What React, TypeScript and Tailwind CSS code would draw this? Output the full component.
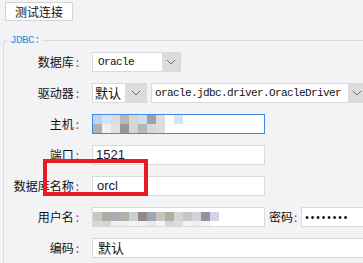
const cjk = { fontFamily: '"Noto Sans CJK SC", "Noto Sans", sans-serif' };
const mono = { fontFamily: '"Liberation Mono", "DejaVu Sans Mono", monospace' };
const sans = { fontFamily: '"Liberation Sans", "Noto Sans", sans-serif' };

const hostBlocks = [
  ["#bcd4f0", "#d4e4f8", "#dcdcdc", "#b8b8b4", "#d8d4d0", "#d0dcf0", "#a0a0a8", "#dcdcdc", "#ffffff", "#d8e4f8"],
  ["#b0b0b0", "#f0f0f0", "#e8e0dc", "#909898", "#d8d4d0", "#b0b8c0", "#d8d8d8", "#dcdcdc", "#ffffff", "#ffffff"],
];

const userBlocks = [
  ["#c8c8c8", "#b0aca8", "#a8acb4", "#b0b0ac", "#c8d0d0", "#908888", "#a0a4b4", "#c8c4b8", "#b0aca8", "#d8d4d4", "#c8c4cc", "#d0d4d8", "#9890a0", "#d0d4e4", "#ffffff"],
  ["#d8d8d8", "#d8d4d0", "#f0f0f0", "#f0f0f0", "#f4f4f4", "#f0f0f0", "#e8e8e8", "#f4f4f4", "#d0d8e0", "#d8e0dc", "#eef4f8", "#f0f0f0", "#f4f4f4", "#ffffff", "#ffffff"],
];

function Mosaic({ rows }: { rows: string[][] }) {
  return (
    <div className="flex flex-col">
      {rows.map((row, i) => (
        <div key={i} className="flex">
          {row.map((c, j) => (
            <div key={j} className="h-[9px] w-[9px]" style={{ backgroundColor: c }} />
          ))}
        </div>
      ))}
    </div>
  );
}

function Chevron() {
  return (
    <svg width="10" height="6" viewBox="0 0 10 6" fill="none">
      <path d="M1 1L5 5L9 1" stroke="#707070" strokeWidth="1" />
    </svg>
  );
}

function Label({ text }: { text: string }) {
  return (
    <div className="flex w-[78px] shrink-0 items-center justify-end pr-[3px] text-[12px] text-[#111]" style={cjk}>
      {text}
      <span className="ml-[2px] text-[#8a3a8c]">:</span>
    </div>
  );
}

function Row({ label, children }: { label: string; children: React.ReactNode }) {
  return (
    <div className="flex h-[20px] items-center">
      <Label text={label} />
      <div className="ml-[10px] flex h-full items-center">{children}</div>
    </div>
  );
}

export default function App() {
  return (
    <div className="relative h-[263px] w-[363px] overflow-hidden bg-[#f3f3f5]">
      <div className="pl-[5px] pt-[2px]">
        <button
          className="flex h-[19px] w-[68px] items-center justify-center border border-[#d4d4d4] bg-white text-[12px] text-[#111]"
          style={cjk}
        >
          测试连接
        </button>
      </div>

      <fieldset className="ml-[3px] mt-[12px] w-[420px] rounded-tl-[4px] border-l border-t border-[#dcdcdc] pb-[20px] pt-[5px]">
        <legend className="ml-[4px] px-[2px] text-[11px] leading-[14px] tracking-[-0.6px] text-[#2a90dc]" style={mono}>
          JDBC:
        </legend>

        <div className="flex flex-col gap-[11px]">
          <Row label="数据库">
            <div className="flex h-[20px] w-[89px] border border-[#dadada] bg-white">
              <div className="flex flex-1 items-center pl-[5px] text-[11px] tracking-[-0.6px] text-[#111]" style={mono}>
                Oracle
              </div>
              <div className="flex w-[18px] items-center justify-center bg-[#dcdcdc]">
                <Chevron />
              </div>
            </div>
          </Row>

          <Row label="驱动器">
            <div className="flex h-[20px] w-[55px] border border-[#dadada] bg-white">
              <div className="flex flex-1 items-center pl-[2px] text-[13px] text-[#111]" style={cjk}>
                默认
              </div>
              <div className="flex w-[21px] items-center justify-center bg-[#dcdcdc]">
                <Chevron />
              </div>
            </div>
            <div className="ml-[4px] flex h-[20px] w-[216px] border border-[#dadada] bg-white">
              <div className="flex flex-1 items-center pl-[3px] text-[11px] tracking-[-0.6px] text-[#111]" style={mono}>
                oracle.jdbc.driver.OracleDriver
              </div>
              <div className="flex w-[18px] items-center justify-center bg-[#dcdcdc]">
                <Chevron />
              </div>
            </div>
          </Row>

          <Row label="主机">
            <div className="flex h-[20px] w-[173px] items-center border border-[#3c8ce8] bg-white">
              <Mosaic rows={hostBlocks} />
            </div>
          </Row>

          <Row label="端口">
            <div className="flex h-[20px] w-[173px] items-center border border-[#dadada] bg-white pl-[3px] text-[13px] text-[#14143a]" style={sans}>
              1521
            </div>
          </Row>

          <Row label="数据库名称">
            <div className="flex h-[20px] w-[173px] items-center border border-[#dadada] bg-white pl-[4px] text-[13px] text-[#14143a]" style={sans}>
              orcl
            </div>
          </Row>

          <div className="flex h-[20px] items-center">
            <Label text="用户名" />
            <div className="ml-[10px] flex h-[20px] w-[173px] items-center overflow-hidden border border-[#dadada] bg-white pt-[8px]">
              <Mosaic rows={userBlocks} />
            </div>
            <div className="ml-[4px] flex items-center text-[12px] text-[#111]" style={cjk}>
              密码<span className="ml-[1px] text-[#8a3a8c]">:</span>
            </div>
            <div className="ml-[4px] flex h-[20px] w-[80px] items-center border border-[#dadada] bg-white pl-[3px] text-[10px] tracking-[2px] text-[#000]" style={sans}>
              ••••••••
            </div>
          </div>

          <Row label="编码">
            <div className="flex h-[20px] w-[290px] items-center border border-[#dadada] bg-white pl-[5px] text-[13px] text-[#111]" style={cjk}>
              默认
            </div>
          </Row>
        </div>
      </fieldset>

      <div className="absolute left-[43px] top-[159px] h-[37px] w-[105px] border-[4px] border-[#e51c23]" />
    </div>
  );
}
